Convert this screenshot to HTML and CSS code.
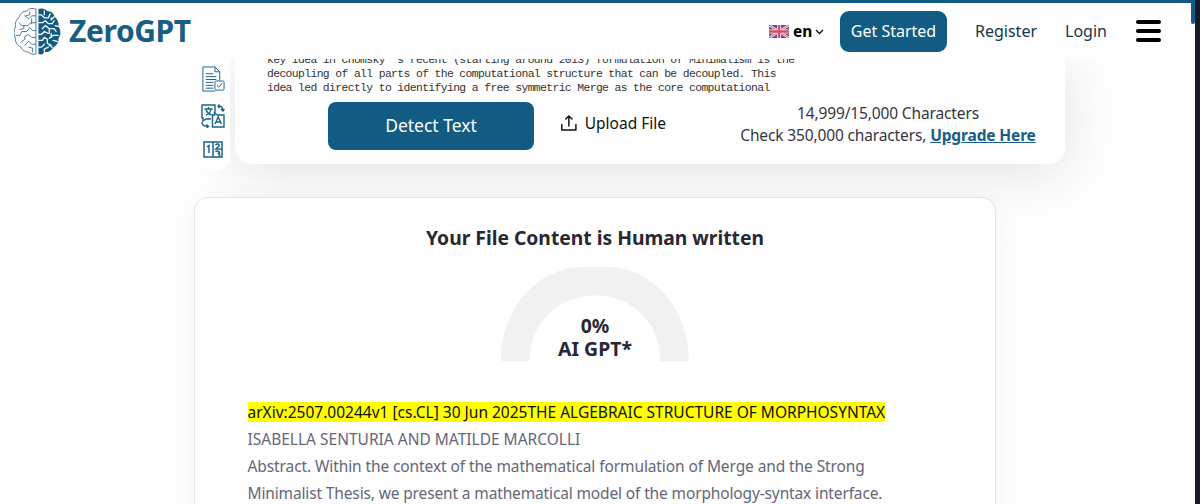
FILE: index.html
```html
<!DOCTYPE html>
<html lang="en">
<head>
<meta charset="utf-8">
<title>ZeroGPT</title>
<link rel="stylesheet" href="styles.css">
</head>
<body>
<div class="page">
<header class="header">
  <a class="brand">
    <svg class="brain" viewBox="0 0 48 48" fill="none" stroke-linecap="round" stroke-linejoin="round">
      <path class="brain-fill" d="M25 1 C28-.3 32 .5 34 3 C38 3 41 6 41.500 9 C45 12 46 16 45.500 19 C48 23 48 28 45.500 31 C46 35 43 39 40 40 C38 44 35 45 32 45 C30 47.500 27 48 25 47Z"/>
      <path class="brain-gap" d="M25 7h3l3 3h4l2-4M25 15h4l3-2 3 3h4l2-3M29 21l3-3 4 3h5l2 3M25 27h3l3-3 4 2M36 31l4-3h5M25 33h4l2-3 3 2v4l4 2M25 40h3l3-3M31 46v-4l4-2M31 3v4M38 12v-2M36 21v5M38 30v-4M41 9l-3 3M46 19l-4-1M44 34l-4-1M39 40l-3-2"/>
      <path class="brain-line" d="M22 1 C19-.3 15 .5 13 3 C9 3 6 6 5.500 9 C2 12 1 16 1.500 19 C-.5 23-.5 28 1.500 31 C1 35 4 39 7 40 C9 44 12 45 15 45 C17 47.500 20 48 22 47Z"/>
      <path class="brain-line" d="M22 8h-4l-3 3-4-3M22 15h-5l-3 3H8l-3-3M16 4v3l-4 1M22 23h-3l-3-3-3 4H8l-2 4H2M22 30h-4l-3-3-4 2v3l-4 3M22 37h-4l-3-3-4 4M19 45v-4l-4-1M10 18v3l-4 1M18 11v5"/>
    </svg>
    <span class="brand-name">ZeroGPT</span>
  </a>
  <nav class="nav">
    <div class="lang">
      <svg class="flag" viewBox="0 0 20 13"><path fill="#4656a4" d="M0 0h20v13H0z"/><path stroke="#f3e9f1" stroke-width="2.400" d="M0 0l20 13M20 0L0 13"/><path stroke="#e0566c" stroke-width="1" d="M0 0l20 13M20 0L0 13"/><path stroke="#f3e9f1" stroke-width="4" d="M10 0v13M0 6.500h20"/><path stroke="#e2485c" stroke-width="2.300" d="M10 0v13M0 6.500h20"/></svg>
      <span class="lang-code">en</span>
      <svg class="chevron" viewBox="0 0 9 6"><path d="M1 1l3.500 3.500L8 1" fill="none" stroke="#111" stroke-width="1.300"/></svg>
    </div>
    <a class="start"><span>Get Started</span></a>
    <a class="link register">Register</a>
    <a class="link login">Login</a>
    <div class="burger"><i></i><i></i><i></i></div>
  </nav>
</header>
<main class="main">
  <div class="workspace">
    <aside class="tools">
      <svg class="tool" viewBox="0 0 24 28"><path d="M14.500 26H1.500V1h12.500l5 5v9M14 1v5h5M4.500 8h8M4.500 11h11M4.500 14h11M4.500 17h8M4.500 20h8M4.500 23h8"/><rect x="14" y="15.500" width="9.500" height="9.500" rx="1.500"/><path d="M16 20l2 2 3.500-4"/></svg>
      <svg class="tool translate" viewBox="0 0 24 24"><path d="M10 15H5l-3 2v-3H1V1h13v8M3.500 5h8M7.500 3v2M5 11c3-1 4.500-3 5-6M5 6c1 2.500 3 4 5.500 5M11.500 23V11h2V9l3 2H23v12zM14 20l3.200-7 3.200 7M15 18h4.500M17 2c3 0 5 1.500 5 5M20 5l2 2 1.500-2M18.500.5L17 2l1.500 2M1 18c0 3 2 4.500 6 4.500M5.500 20.500l2 2-2 1.500"/></svg>
      <svg class="tool counter" viewBox="0 0 20 17"><path d="M1 1h18v15H1zM10 1v15M4 6l2-1.500V12M12.500 4C14 2.300 16.500 3 16 4.800L12.800 8H19M12.500 10.800C14 9.500 16.800 10 16.300 11.800L14.800 12.500c2 0 2 1.500 1.500 3"/></svg>
    </aside>
    <section class="editor">
      <div class="source">
        <div class="s1">key idea in Chomsky 's recent (starting around 2013) formulation of Minimalism is the</div>
        <div>decoupling of all parts of the computational structure that can be decoupled. This</div>
        <div>idea led directly to identifying a free symmetric Merge as the core computational</div>
      </div>
      <div class="actions">
        <button class="detect"><span>Detect Text</span></button>
        <div class="upload">
          <svg viewBox="0 0 16 16" fill="none" stroke="#111" stroke-width="1.500" stroke-linecap="round" stroke-linejoin="round"><path d="M.8 9.500v5.700h14.400V9.500M8 11V1M4.800 4L8 .9 11.200 4"/></svg>
          <span>Upload File</span>
        </div>
        <div class="quota">
          <div class="count">14,999/15,000 Characters</div>
          <div><span class="check">Check 350,000 characters, </span><a class="upgrade">Upgrade Here</a></div>
        </div>
      </div>
    </section>
  </div>
  <section class="result">
    <h2><span>Your File Content is Human written</span></h2>
    <div class="gauge">
      <svg viewBox="0 0 188 94"><path d="M0 94C0 38 40 0 81 0h26c41 0 81 38 81 94h-28.500C159.500 56 131 28.500 94 28.500S28.500 56 28.500 94z" fill="#f1f1f1"/></svg>
      <div class="score"><div>0%</div><div class="gpt">AI GPT*</div></div>
    </div>
    <div class="report">
      <div><mark>arXiv:2507.00244v1 [cs.CL] 30 Jun 2025THE ALGEBRAIC STRUCTURE OF MORPHOSYNTAX</mark></div>
      <div class="r2">ISABELLA SENTURIA AND MATILDE MARCOLLI</div>
      <div class="r3">Abstract. Within the context of the mathematical formulation of Merge and the Strong</div>
      <div class="r4">Minimalist Thesis, we present a mathematical model of the morphology-syntax interface.</div>
    </div>
  </section>
</main>
<div class="edge"></div>
<div class="scroll"></div>
</div>
</body>
</html>
```

FILE: styles.css
```css
* { box-sizing: border-box; }
body { margin: 0; font-family: "Noto Sans", "Open Sans", sans-serif; background: #fefefe; }
.page { position: relative; width: 1200px; height: 504px; overflow: hidden; white-space: nowrap; }
.header { position: relative; z-index: 2; display: flex; justify-content: space-between; height: 59px; border-top: 3px solid #125b82; background: #fefefe; padding-left: 14px; }
.brand { display: flex; align-items: center; height: 56px; gap: 8px; }
.brain { width: 47px; height: 47px; }
.brain-fill { fill: #125b82; }
.brain-gap { stroke: #fefefe; stroke-width: 1.3; }
.brain-line { stroke: #316f92; stroke-width: .9; }
.brand-name { font-weight: 700; font-size: 30px; color: #175d84; letter-spacing: -.4px; line-height: 40px; }
.nav { display: flex; align-items: center; height: 56px; padding-right: 39px; }
.lang { display: flex; align-items: center; width: 71px; }
.flag { width: 20px; height: 13px; }
.lang-code { font-weight: 700; font-size: 15.5px; margin-left: 4px; width: 19px; }
.chevron { width: 9px; height: 6px; margin: 2px 0 0 3px; }
.start { display: flex; align-items: center; justify-content: center; width: 107px; height: 41px; border-radius: 9px; background: #125b82; color: #fff; font-size: 16px; }
.link { font-size: 16px; color: #17364c; }
.register { margin-left: 28px; width: 62px; }
.login { margin-left: 28px; width: 43px; }
.burger { display: flex; flex-direction: column; gap: 5px; margin-left: 28px; width: 25px; }
.burger i { height: 4px; border-radius: 2px; background: #000; }
.main { display: flex; flex-direction: column; }
.workspace { display: flex; height: 105px; padding-left: 196px; }
.tools { position: relative; z-index: 1; width: 34px; height: 112px; background: #fefefe; border-radius: 0 0 14px 14px; padding: 7px 0 0 5px; display: flex; flex-direction: column; align-items: flex-start; }
.tool { width: 24px; height: 27px; fill: none; stroke: #1b628a; stroke-width: 1; }
.translate { height: 24px; margin-top: 11px; stroke-width: 1.4; }
.counter { width: 20px; height: 17px; margin: 13px 0 0 2px; stroke-width: 1.5; }
.editor { margin-left: 5px; width: 830px; height: 105px; background: #fefefe; border-radius: 0 0 16px 16px; box-shadow: 0 8px 55px rgba(35, 35, 80, .13); }
.source { display: flow-root; height: 43px; padding-left: 32px; font: 11.4px/14.4px "Liberation Mono", monospace; letter-spacing: -.63px; color: #333; }
.s1 { margin-top: -6.4px; }
.actions { display: flex; padding-left: 93px; }
.detect { width: 206px; height: 48px; border: 0; border-radius: 8px; background: #125b82; color: #fff; font: 17.5px/24px "Noto Sans", sans-serif; padding: 0 0 2px; }
.upload { display: flex; gap: 8px; align-items: center; height: 41px; margin-left: 27px; width: 105px; font-size: 15.5px; color: #111; }
.upload svg { width: 16px; height: 16px; }
.quota { margin-left: 74px; width: 296px; text-align: center; font-size: 15.5px; line-height: 22px; letter-spacing: -.14px; color: #363640; }
.upgrade { color: #175d84; font-weight: 700; text-decoration: underline; }
.result { position: relative; z-index: 1; margin: 33px 0 0 194px; width: 802px; height: 420px; background: #fefefe; border: 1px solid #e4e4ec; border-radius: 14px; box-shadow: 0 8px 30px rgba(35, 35, 80, .05); }
h2 { margin: 26px 0 0; text-align: center; font-size: 19.3px; line-height: 28px; color: #282833; }
.gauge { position: relative; width: 188px; height: 94px; margin: 15px auto 0; }
.gauge svg { display: block; width: 188px; height: 94px; }
.score { position: absolute; left: 0; right: 0; top: 47px; text-align: center; font-weight: 700; font-size: 19.4px; line-height: 23px; color: #282833; }
.report { margin: 38px 0 0 52.5px; font-size: 15.5px; line-height: 27px; color: #666678; }
.r3 { letter-spacing: -.1px; }
.r4 { letter-spacing: -.14px; }
mark { display: inline-block; height: 20px; line-height: 20px; background: #ff0; color: #111; }
.edge { position: absolute; z-index: 3; right: 0; top: 0; width: 5px; height: 504px; background: #171829; }
.scroll { position: absolute; z-index: 4; left: 1191px; top: 0; width: 4px; height: 24px; border-radius: 0 0 2px 2px; background: #125b82; }
```
